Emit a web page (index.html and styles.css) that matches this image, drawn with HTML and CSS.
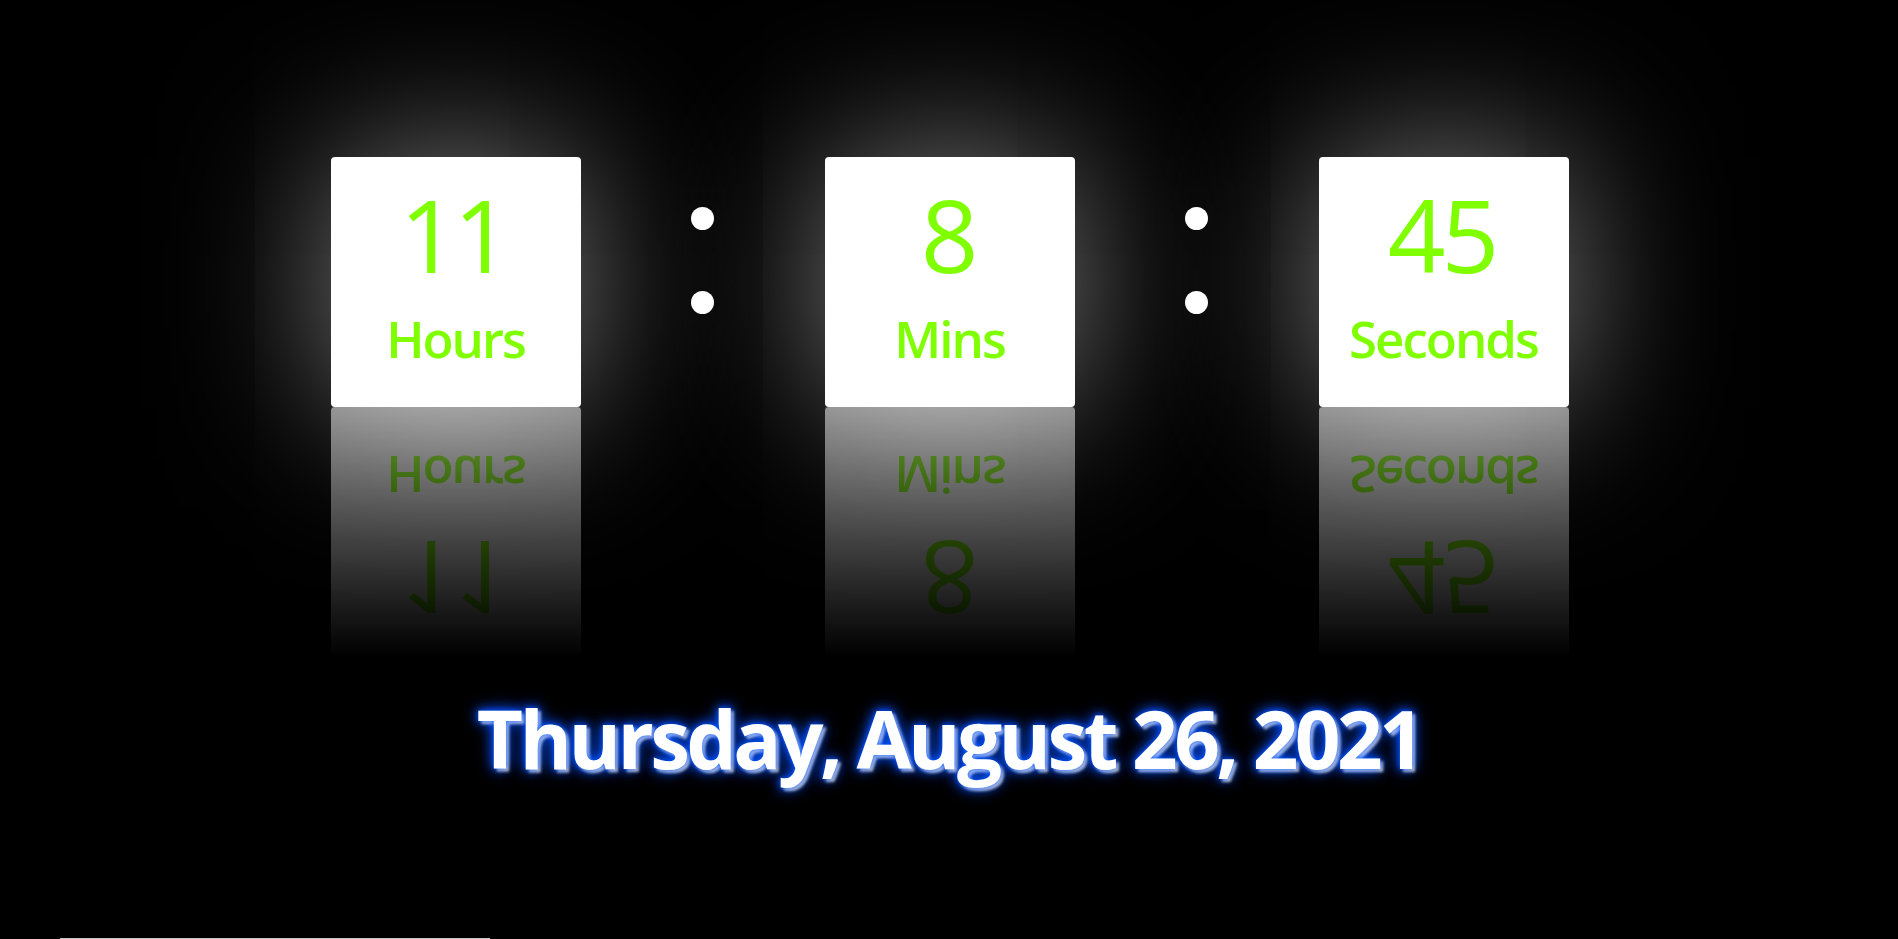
FILE: index.html
```html
<!DOCTYPE html>
<html lang="en">
<head>
<meta charset="utf-8">
<title>Clock</title>
<link rel="stylesheet" href="styles.css">
</head>
<body>
<main class="page">
  <section class="clock">
    <div class="card">
      <span class="num">11</span>
      <span class="label">Hours</span>
    </div>
    <div class="colon"><span class="dot"></span><span class="dot"></span></div>
    <div class="card">
      <span class="num">8</span>
      <span class="label">Mins</span>
    </div>
    <div class="colon"><span class="dot"></span><span class="dot"></span></div>
    <div class="card">
      <span class="num">45</span>
      <span class="label">Seconds</span>
    </div>
  </section>
  <p class="date">Thursday, August 26, 2021</p>
</main>
<div class="scrollbar"></div>
</body>
</html>
```
FILE: styles.css
```css
html, body {
  margin: 0;
  padding: 0;
  background: #000;
  height: 100%;
  overflow: hidden;
}
body {
  font-family: "Open Sans", "Noto Sans", sans-serif;
}
.page {
  display: flex;
  flex-direction: column;
  align-items: center;
  padding-top: 157px;
}
.clock {
  display: flex;
  align-items: flex-start;
  margin-left: 1px;
}
.card {
  width: 250px;
  height: 250px;
  background: #fff;
  border-radius: 4px;
  box-shadow: 0 0 160px rgba(255, 255, 255, 0.5);
  display: flex;
  flex-direction: column;
  align-items: center;
  color: #7fff00;
  -webkit-box-reflect: below 0 linear-gradient(transparent, rgba(255, 255, 255, 0.53));
}
.num {
  font-size: 101px;
  line-height: 1;
  font-weight: 400;
  letter-spacing: -4px;
  text-indent: -4px;
  margin-top: 27px;
}
.label {
  font-size: 51px;
  line-height: 1;
  font-weight: 600;
  letter-spacing: -2px;
  margin-top: 28px;
}
.colon {
  width: 244px;
  display: flex;
  flex-direction: column;
  align-items: center;
  gap: 61px;
  padding-top: 50px;
}
.dot {
  width: 23px;
  height: 23px;
  border-radius: 50%;
  background: #fff;
}
.date {
  margin: 291px 0 0;
  font-size: 80px;
  line-height: 1;
  font-weight: 700;
  letter-spacing: -3.6px;
  color: #fff;
  text-shadow: 0 0 5px #0050ff, 3px 3px 3px rgba(255, 255, 255, 0.75), 0 0 12px #0050ff, 0 0 18px #0040d0;
}
.scrollbar {
  position: fixed;
  left: 60px;
  bottom: 0;
  width: 430px;
  height: 1px;
  background: #c4c4c4;
}
```
